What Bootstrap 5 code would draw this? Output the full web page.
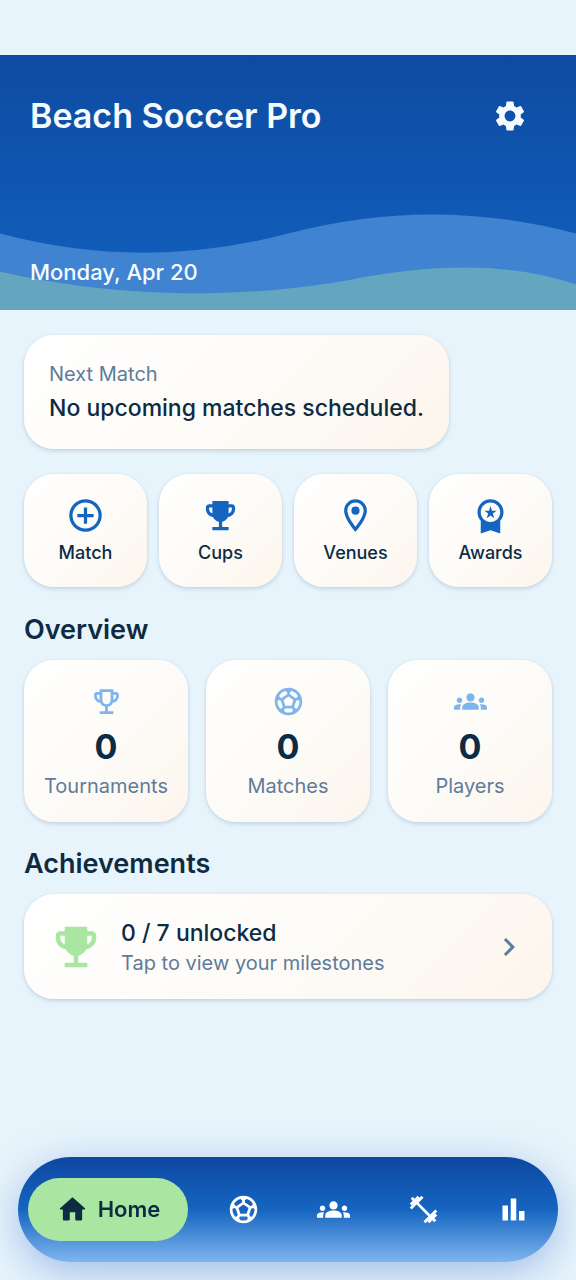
<!DOCTYPE html>
<html lang="en">
<head>
<meta charset="utf-8">
<meta name="viewport" content="width=device-width, initial-scale=1">
<title>Beach Soccer Pro</title>
<link rel="stylesheet" href="https://cdn.jsdelivr.net/npm/bootstrap@5.3.0/dist/css/bootstrap.min.css">
<style>
  :root { --ink: #0d2b42; --muted: #5f7b98; --blue: #1565c0; --sky: #7fb5ea; --lime: #a8e6a1; }
  body { font-family: Inter, "Noto Sans", sans-serif; font-weight: 500; color: var(--ink); background: #e8f4fb; padding-top: 55px; padding-bottom: 140px; }
  svg { display: block; fill: currentColor; }
  .hero { min-height: 255px; padding: 36px 30px 24px; background: linear-gradient(#0e4ba2, #115cb8 75%); color: #f6fbff; }
  .waves { position: absolute; inset: 0; width: 100%; height: 100%; }
  .hero-title { font-size: 34px; line-height: 50px; font-weight: 600; }
  .hero-date { font-size: 22px; line-height: 28px; }
  .icon-btn { width: 72px; height: 50px; color: inherit; }
  .stack { padding: 25px 24px; gap: 25px; }
  .tile { border: 0; border-radius: 30px; font-weight: 500; color: var(--ink); background: linear-gradient(135deg, #fff, #fdfbf7 55%, #fcf5ec); box-shadow: 0 2px 4px rgba(30, 80, 140, .18), 0 0 2px rgba(30, 80, 140, .08); }
  .next-tile { padding: 25px; }
  .text-soft { color: var(--muted); }
  .fs-note { font-size: 20px; line-height: 28px; font-weight: 400; }
  .fs-main { font-size: 23px; line-height: 32px; }
  .quick { gap: 12px; }
  .quick .tile { padding: 22px 4px 20px; gap: 4px; font-size: 18px; line-height: 28px; }
  .quick svg { color: var(--blue); }
  .stats { gap: 18px; }
  .stats .tile { padding: 25px 4px 22px; }
  .stats svg { color: var(--sky); }
  .stat-value { font-size: 34px; line-height: 54px; font-weight: 700; padding-top: 2px; margin-bottom: -2px; }
  .section-title { font-size: 27px; line-height: 36px; font-weight: 600; margin-bottom: 12px; }
  .stack section + section { margin-top: -1px; }
  .award { padding: 23px 25px 22px; gap: 18px; }
  .award svg:first-child { color: var(--lime); }
  .dock { margin: 0 18px 18px; height: 105px; border-radius: 53px; background: linear-gradient(#0d47a1, #1565c0 50%, #7fb5ee); box-shadow: 0 10px 40px rgba(21, 85, 192, .34); color: #fff; }
  .dock a { color: inherit; text-decoration: none; }
  .dock .slot { flex: 1 1 0; }
  .dock .slot-wide { flex: 2 1 0; }
  .pill { height: 63px; margin: 0 10px; border-radius: 32px; background: var(--lime); gap: 9px; font-size: 22px; font-weight: 600; }
  .dock .pill { color: var(--ink); }
</style>
</head>
<body>
<svg class="d-none" aria-hidden="true">
  <symbol id="i-gear" viewBox="0 0 24 24"><path d="M19.14 12.94c.04-.3.06-.61.06-.94 0-.32-.02-.64-.07-.94l2.03-1.58c.18-.14.23-.41.12-.61l-1.92-3.32c-.12-.22-.37-.29-.59-.22l-2.39.96c-.5-.38-1.03-.7-1.62-.94l-.36-2.54c-.04-.24-.24-.41-.48-.41h-3.84c-.24 0-.43.17-.47.41l-.36 2.54c-.59.24-1.13.57-1.62.94l-2.39-.96c-.22-.08-.47 0-.59.22L2.74 8.87c-.12.21-.08.47.12.61l2.03 1.58c-.05.3-.09.63-.09.94s.02.64.07.94l-2.03 1.58c-.18.14-.23.41-.12.61l1.92 3.32c.12.22.37.29.59.22l2.39-.96c.5.38 1.03.7 1.62.94l.36 2.54c.05.24.24.41.48.41h3.84c.24 0 .44-.17.47-.41l.36-2.54c.59-.24 1.13-.56 1.62-.94l2.39.96c.22.08.47 0 .59-.22l1.92-3.32c.12-.22.07-.47-.12-.61l-2.01-1.58zM12 15.6c-1.98 0-3.6-1.62-3.6-3.6s1.62-3.6 3.6-3.6 3.6 1.62 3.6 3.6-1.62 3.6-3.6 3.6z"/></symbol>
  <symbol id="i-add" viewBox="0 0 24 24"><path d="M13 7h-2v4H7v2h4v4h2v-4h4v-2h-4V7zm-1-5C6.48 2 2 6.48 2 12s4.48 10 10 10 10-4.48 10-10S17.52 2 12 2zm0 18c-4.41 0-8-3.59-8-8s3.59-8 8-8 8 3.59 8 8-3.59 8-8 8z"/></symbol>
  <symbol id="i-cup" viewBox="0 0 24 24"><path d="M19 5h-2V3H7v2H5c-1.1 0-2 .9-2 2v1c0 2.55 1.92 4.63 4.39 4.94.63 1.5 1.98 2.63 3.61 2.96V19H7v2h10v-2h-4v-3.1c1.63-.33 2.98-1.46 3.61-2.96C19.08 12.63 21 10.55 21 8V7c0-1.1-.9-2-2-2zM5 8V7h2v3.82C5.84 10.4 5 9.3 5 8zm14 0c0 1.3-.84 2.4-2 2.82V7h2v1z"/></symbol>
  <symbol id="i-cup-line" viewBox="0 0 24 24"><path fill-rule="evenodd" d="M19 5h-2V3H7v2H5c-1.1 0-2 .9-2 2v1c0 2.55 1.92 4.63 4.39 4.94.63 1.5 1.98 2.63 3.61 2.96V19H7v2h10v-2h-4v-3.1c1.63-.33 2.98-1.46 3.61-2.96C19.08 12.63 21 10.55 21 8V7c0-1.1-.9-2-2-2zM5 8V7h2v3.82C5.84 10.4 5 9.3 5 8zm7 6c-1.65 0-3-1.35-3-3V5h6v6c0 1.65-1.35 3-3 3zm7-6c0 1.3-.84 2.4-2 2.82V7h2v1z"/></symbol>
  <symbol id="i-pin" viewBox="0 0 24 24"><path d="M12 2C8.13 2 5 5.13 5 9c0 5.25 7 13 7 13s7-7.75 7-13c0-3.87-3.13-7-7-7zM7 9c0-2.76 2.24-5 5-5s5 2.24 5 5c0 2.88-2.88 7.19-5 9.88C9.92 16.21 7 11.85 7 9z"/><circle cx="12" cy="9" r="2.5"/></symbol>
  <symbol id="i-award" viewBox="0 0 24 24"><path d="M9.68 13.69L12 11.93l2.31 1.76-.88-2.85L15.75 9h-2.84L12 6.19 11.09 9H8.25l2.31 1.84-.88 2.85zM20 10c0-4.42-3.58-8-8-8s-8 3.58-8 8c0 2.03.76 3.87 2 5.28V23l6-2 6 2v-7.72c1.24-1.41 2-3.25 2-5.28zm-8-6c3.31 0 6 2.69 6 6s-2.69 6-6 6-6-2.69-6-6 2.69-6 6-6z"/></symbol>
  <symbol id="i-ball" viewBox="0 0 24 24"><path fill-rule="evenodd" d="M12 2C6.48 2 2 6.48 2 12s4.48 10 10 10 10-4.48 10-10S17.52 2 12 2zm1 3.3 1.35-.95c1.82.56 3.37 1.76 4.38 3.34l-.39 1.34-1.35.46L13 6.7V5.3zm-3.35-.95L11 5.3v1.4L7.01 9.49l-1.35-.46-.39-1.34c1.01-1.57 2.56-2.77 4.38-3.34zM7.08 17.11l-1.14.1C4.73 15.81 4 13.99 4 12c0-.12.01-.23.02-.35l1-.73 1.38.48 1.46 4.34-.78 1.37zm7.42 2.48c-.79.26-1.63.41-2.5.41s-1.71-.15-2.5-.41l-.69-1.49.64-1.1h5.11l.64 1.11-.7 1.48zM14.27 15H9.73l-1.35-4.02L12 8.44l3.63 2.54L14.27 15zm3.79 2.21-1.14-.1-.79-1.37 1.46-4.34 1.39-.47 1 .73c.01.11.02.22.02.34 0 1.99-.73 3.81-1.94 5.21z"/></symbol>
  <symbol id="i-group" viewBox="0 0 24 24"><path d="M12 12.75c1.63 0 3.07.39 4.24.9 1.08.48 1.76 1.56 1.76 2.73V18H6v-1.61c0-1.18.68-2.26 1.76-2.73 1.17-.52 2.61-.91 4.24-.91zM4 13c1.1 0 2-.9 2-2s-.9-2-2-2-2 .9-2 2 .9 2 2 2zm1.13 1.1c-.37-.06-.74-.1-1.13-.1-.99 0-1.93.21-2.78.58C.48 14.9 0 15.62 0 16.43V18h4.5v-1.61c0-.83.23-1.61.63-2.29zM20 13c1.1 0 2-.9 2-2s-.9-2-2-2-2 .9-2 2 .9 2 2 2zm4 3.43c0-.81-.48-1.53-1.22-1.85-.85-.37-1.79-.58-2.78-.58-.39 0-.76.04-1.13.1.4.68.63 1.46.63 2.29V18H24v-1.57zM12 6c1.66 0 3 1.34 3 3s-1.34 3-3 3-3-1.34-3-3 1.34-3 3-3z"/></symbol>
  <symbol id="i-gym" viewBox="0 0 24 24"><path d="M20.57 14.86L22 13.43 20.57 12 17 15.57 8.43 7 12 3.43 10.57 2 9.14 3.43 7.71 2 5.57 4.14 4.14 2.71 2.71 4.14l1.43 1.43L2 7.71l1.43 1.43L2 10.57 3.43 12 7 8.43 15.57 17 12 20.57 13.43 22l1.43-1.43L16.29 22l2.14-2.14 1.43 1.43 1.43-1.43-1.43-1.43L22 16.29z"/></symbol>
  <symbol id="i-bars" viewBox="0 0 24 24"><path d="M4 9h4v11H4zm12 4h4v7h-4zm-6-9h4v16h-4z"/></symbol>
  <symbol id="i-home" viewBox="0 0 24 24"><path d="M10 19v-5h4v5c0 .55.45 1 1 1h3c.55 0 1-.45 1-1v-7h1.7c.46 0 .68-.57.33-.87L12.67 3.6c-.38-.34-.96-.34-1.34 0l-8.36 7.53c-.34.3-.13.87.33.87H5v7c0 .55.45 1 1 1h3c.55 0 1-.45 1-1z"/></symbol>
  <symbol id="i-next" viewBox="0 0 24 24"><path d="M10 6L8.59 7.41 13.17 12l-4.58 4.59L10 18l6-6z"/></symbol>
</svg>

<header class="hero position-relative d-flex flex-column justify-content-between">
  <svg class="waves" viewBox="0 0 100 100" preserveAspectRatio="none" aria-hidden="true">
    <path fill="#3f83d1" d="M0 70Q25 85 50 70T100 70V100H0z"/>
    <path fill="#64a6c0" d="M0 85Q30 100 60 88.500Q84 77.500 100 90V100H0z"/>
  </svg>
  <div class="position-relative d-flex justify-content-between align-items-center">
    <h1 class="hero-title m-0">Beach Soccer Pro</h1>
    <button type="button" class="btn icon-btn border-0 p-0 d-flex align-items-center justify-content-center" aria-label="Settings"><svg width="36" height="36"><use href="#i-gear"/></svg></button>
  </div>
  <div class="hero-date position-relative">Monday, Apr 20</div>
</header>

<main class="stack d-flex flex-column">
  <section class="tile card next-tile align-self-start">
    <div class="fs-note text-soft mb-1">Next Match</div>
    <div class="fs-main">No upcoming matches scheduled.</div>
  </section>

  <div class="quick d-flex">
    <button type="button" class="tile flex-fill w-100 d-flex flex-column align-items-center"><svg width="39" height="39"><use href="#i-add"/></svg>Match</button>
    <button type="button" class="tile flex-fill w-100 d-flex flex-column align-items-center"><svg width="39" height="39"><use href="#i-cup"/></svg>Cups</button>
    <button type="button" class="tile flex-fill w-100 d-flex flex-column align-items-center"><svg width="39" height="39"><use href="#i-pin"/></svg>Venues</button>
    <button type="button" class="tile flex-fill w-100 d-flex flex-column align-items-center"><svg width="39" height="39"><use href="#i-award"/></svg>Awards</button>
  </div>

  <section>
    <h2 class="section-title">Overview</h2>
    <div class="stats d-flex">
      <div class="tile card w-100 align-items-center"><svg width="33" height="33"><use href="#i-cup-line"/></svg><div class="stat-value">0</div><div class="fs-note text-soft">Tournaments</div></div>
      <div class="tile card w-100 align-items-center"><svg width="33" height="33"><use href="#i-ball"/></svg><div class="stat-value">0</div><div class="fs-note text-soft">Matches</div></div>
      <div class="tile card w-100 align-items-center"><svg width="33" height="33"><use href="#i-group"/></svg><div class="stat-value">0</div><div class="fs-note text-soft">Players</div></div>
    </div>
  </section>

  <section>
    <h2 class="section-title">Achievements</h2>
    <button type="button" class="tile award w-100 d-flex align-items-center text-start">
      <svg width="54" height="54"><use href="#i-cup"/></svg>
      <span class="flex-grow-1">
        <span class="fs-main d-block">0 / 7 unlocked</span>
        <span class="fs-note text-soft d-block">Tap to view your milestones</span>
      </span>
      <svg class="text-soft" width="36" height="36"><use href="#i-next"/></svg>
    </button>
  </section>
</main>

<nav class="dock fixed-bottom d-flex align-items-center" aria-label="Main">
  <div class="slot-wide"><a href="#home" class="pill d-flex align-items-center justify-content-center" aria-current="page"><svg width="33" height="33"><use href="#i-home"/></svg>Home</a></div>
  <a href="#matches" class="slot d-flex justify-content-center" aria-label="Matches"><svg width="33" height="33"><use href="#i-ball"/></svg></a>
  <a href="#players" class="slot d-flex justify-content-center" aria-label="Players"><svg width="33" height="33"><use href="#i-group"/></svg></a>
  <a href="#training" class="slot d-flex justify-content-center" aria-label="Training"><svg width="33" height="33"><use href="#i-gym"/></svg></a>
  <a href="#stats" class="slot d-flex justify-content-center" aria-label="Statistics"><svg width="33" height="33"><use href="#i-bars"/></svg></a>
</nav>
<script src="https://cdn.jsdelivr.net/npm/bootstrap@5.3.0/dist/js/bootstrap.bundle.min.js"></script>
</body>
</html>
